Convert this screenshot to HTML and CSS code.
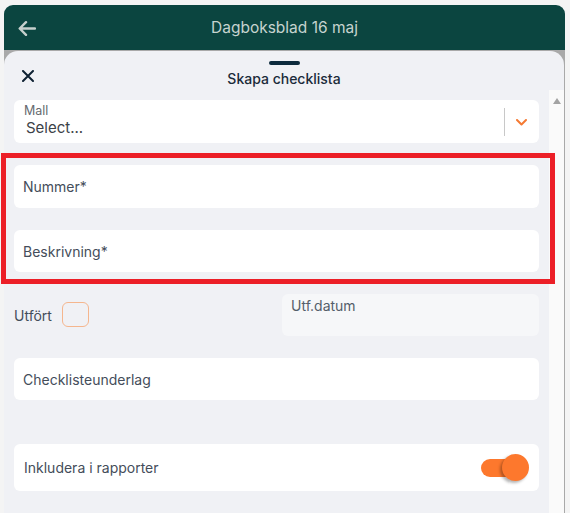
FILE: index.html
```html
<!DOCTYPE html>
<html lang="sv">
<head>
    <meta charset="UTF-8">
    <title>Skapa checklista</title>
    <link rel="stylesheet" href="styles.css">
</head>
<body>
    <div class="app">
        <div class="topbar">
            <svg class="back" width="18" height="15" viewBox="0 0 18 15">
                <path d="M17 7.5H2M8 1.2L1.7 7.5L8 13.8" fill="none" stroke="#c6d0cd" stroke-width="2.4" stroke-linecap="round" stroke-linejoin="round"/>
            </svg>
            <div class="topbar-title">Dagboksblad 16 maj</div>
            <span></span>
        </div>
        <div class="backdrop">
            <div class="sheet">
                <div class="handle"></div>
                <div class="sheet-head">
                    <svg class="close" width="12" height="12" viewBox="0 0 12 12">
                        <path d="M1 1L11 11M11 1L1 11" stroke="#0f2233" stroke-width="2" stroke-linecap="round"/>
                    </svg>
                    <div class="sheet-title">Skapa checklista</div>
                    <span></span>
                </div>
                <div class="sheet-body">
                    <div class="form">
                        <div class="select">
                            <div class="select-value">
                                <div class="select-label">Mall</div>
                                <div class="select-text">Select...</div>
                            </div>
                            <div class="select-sep"></div>
                            <svg class="chevron" width="11" height="7" viewBox="0 0 11 7">
                                <path d="M1 1L5.5 5.5L10 1" fill="none" stroke="#f57a33" stroke-width="2" stroke-linecap="round" stroke-linejoin="round"/>
                            </svg>
                        </div>

                        <div class="highlight">
                            <div class="field field-tall">Nummer*</div>
                            <div class="field">Beskrivning*</div>
                        </div>

                        <div class="row-done">
                            <div class="done">
                                <span>Utfört</span>
                                <span class="checkbox"></span>
                            </div>
                            <div class="date-box">Utf.datum</div>
                        </div>

                        <div class="field">Checklisteunderlag</div>
                        <div class="spacer"></div>

                        <div class="field field-toggle">
                            <span>Inkludera i rapporter</span>
                            <span class="toggle">
                                <span class="toggle-track"></span>
                                <span class="toggle-knob"></span>
                            </span>
                        </div>
                    </div>
                    <div class="scrollbar">
                        <span class="scroll-up"></span>
                    </div>
                </div>
            </div>
        </div>
    </div>
</body>
</html>
```

FILE: styles.css
```css
*{
    margin:0;
    padding:0;
    box-sizing:border-box;
}
html,body{
    height:513px;
    overflow:hidden;
}
body{
    background:#f4f4f4;
    font-family:Inter, "Noto Sans", sans-serif;
    color:#444d5a;
}
.app{
    margin:5px 5px 0 4px;
    height:508px;
    display:flex;
    flex-direction:column;
}
.topbar{
    height:45px;
    background:#0b4540;
    border-radius:9px 9px 0 0;
    display:grid;
    grid-template-columns:50px 1fr 50px;
    align-items:center;
}
.back{
    margin-left:14px;
    margin-top:1px;
}
.topbar-title{
    text-align:center;
    color:#c6d3cf;
    font-size:15.5px;
}
.backdrop{
    flex:1;
    background:#a9a9a9;
    padding-top:1px;
    display:flex;
}
.sheet{
    flex:1;
    margin-right:1px;
    background:#f0f1f5;
    border-radius:14px 14px 0 0;
    display:flex;
    flex-direction:column;
}
.handle{
    width:31px;
    height:4px;
    margin:10px auto 0;
    border-radius:2px;
    background:#0d2b3d;
}
.sheet-head{
    height:25px;
    display:grid;
    grid-template-columns:50px 1fr 50px;
    align-items:center;
}
.close{
    margin-left:18px;
    margin-top:-4px;
}
.sheet-title{
    text-align:center;
    font-size:14px;
    font-weight:500;
    color:#1b2b3a;
    margin-top:2px;
}
.sheet-body{
    flex:1;
    display:flex;
    gap:10px;
}
.form{
    flex:1;
    padding:10px 0 0 10px;
    display:flex;
    flex-direction:column;
    gap:22px;
}
.select{
    height:43px;
    background:#fff;
    border-radius:6px;
    display:flex;
    align-items:center;
}
.select-value{
    flex:1;
    padding-left:10px;
}
.select-label{
    font-size:12.5px;
    line-height:14px;
    color:#666a70;
    margin-top:-3px;
}
.select-text{
    font-size:15px;
    line-height:19px;
    color:#3c4248;
    padding-left:2px;
}
.select-sep{
    width:1px;
    height:28px;
    background:#c8c8c8;
}
.chevron{
    margin:1px 12px 0 11px;
}
.highlight{
    position:relative;
    display:flex;
    flex-direction:column;
    gap:22px;
}
.highlight::after{
    content:"";
    position:absolute;
    top:-12px;
    bottom:-12px;
    left:-13px;
    right:-16px;
    border:5px solid #ec1f27;
}
.field{
    height:42px;
    background:#fff;
    border-radius:6px;
    padding-left:9px;
    display:flex;
    align-items:center;
    font-size:14px;
}
.field-tall{
    height:43px;
}
.row-done{
    height:42px;
    display:grid;
    grid-template-columns:1fr 257px;
}
.done{
    display:flex;
    align-items:center;
    gap:10px;
    font-size:14px;
    padding-top:1px;
}
.checkbox{
    width:27px;
    height:25px;
    border:1.5px solid #f5b68e;
    border-radius:6px;
    margin-top:-2px;
}
.date-box{
    background:#f6f7f9;
    border-radius:6px;
    padding:3px 9px;
    font-size:14px;
    line-height:17px;
    color:#555e6a;
}
.spacer{
    height:0;
}
.field-toggle{
    height:47px;
    padding:0 10px 0 10px;
    justify-content:space-between;
}
.toggle{
    position:relative;
    width:48px;
    height:27px;
    display:flex;
    align-items:center;
}
.toggle-track{
    width:44px;
    height:18px;
    border-radius:9px;
    background:#fd782d;
}
.toggle-knob{
    position:absolute;
    right:0;
    top:0;
    width:27px;
    height:27px;
    border-radius:50%;
    background:#fd782d;
    box-shadow:-2px 2px 3px rgba(0,0,0,0.3);
}
.scrollbar{
    width:15px;
    background:#fafafa;
    display:flex;
    justify-content:center;
    padding-top:8px;
}
.scroll-up{
    width:0;
    height:0;
    border-left:4px solid transparent;
    border-right:4px solid transparent;
    border-bottom:6px solid #a3a3a3;
}
```
